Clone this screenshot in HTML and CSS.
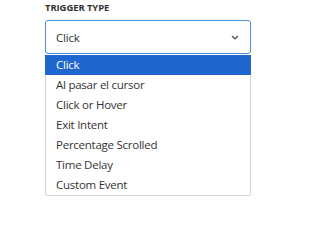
FILE: index.html
```html
<!DOCTYPE html>
<html>
<head>
<meta charset="utf-8">
<link rel="stylesheet" href="styles.css">
</head>
<body>
<div class="field">
  <div class="label">TRIGGER TYPE</div>
  <div class="select">
    <span class="value">Click</span>
    <svg class="chev" width="8" height="5" viewBox="0 0 8 5"><path d="M1 1 L4 3.8 L7 1" fill="none" stroke="#555" stroke-width="1.3"/></svg>
  </div>
  <ul class="list">
    <li class="item active">Click</li>
    <li class="item">Al pasar el cursor</li>
    <li class="item">Click or Hover</li>
    <li class="item">Exit Intent</li>
    <li class="item">Percentage Scrolled</li>
    <li class="item">Time Delay</li>
    <li class="item">Custom Event</li>
  </ul>
</div>
</body>
</html>
```
FILE: styles.css
```css
html, body {
  margin: 0;
  padding: 0;
  background: #fff;
}
body {
  font-family: "Open Sans", "Noto Sans", sans-serif;
  color: #2c3338;
}
.field {
  display: flex;
  flex-direction: column;
  margin-left: 45px;
  width: 206px;
  padding-top: 2px;
}
.label {
  font-size: 9.5px;
  font-weight: 700;
  line-height: 12px;
  color: #333;
  letter-spacing: -0.1px;
}
.select {
  margin-top: 6px;
  height: 32px;
  border: 1px solid #4a90d6;
  border-radius: 3px;
  display: flex;
  align-items: center;
  justify-content: space-between;
  padding: 0 10px 0 10px;
  font-size: 11.5px;
  letter-spacing: -0.2px;
  color: #333;
}
.chev {
  margin-right: 1px;
}
.list {
  list-style: none;
  margin: 1px 0 0 0;
  padding: 0;
  border: 1px solid #d4d4d4;
  border-top: none;
  border-radius: 0 0 2px 2px;
}
.item {
  height: 20px;
  line-height: 20px;
  padding-left: 10px;
  font-size: 11.5px;
  letter-spacing: -0.25px;
  color: #333;
  white-space: nowrap;
}
.item.active {
  background: #1f66cf;
  color: #fff;
  margin: 0 -1px;
  padding-left: 11px;
}
```
